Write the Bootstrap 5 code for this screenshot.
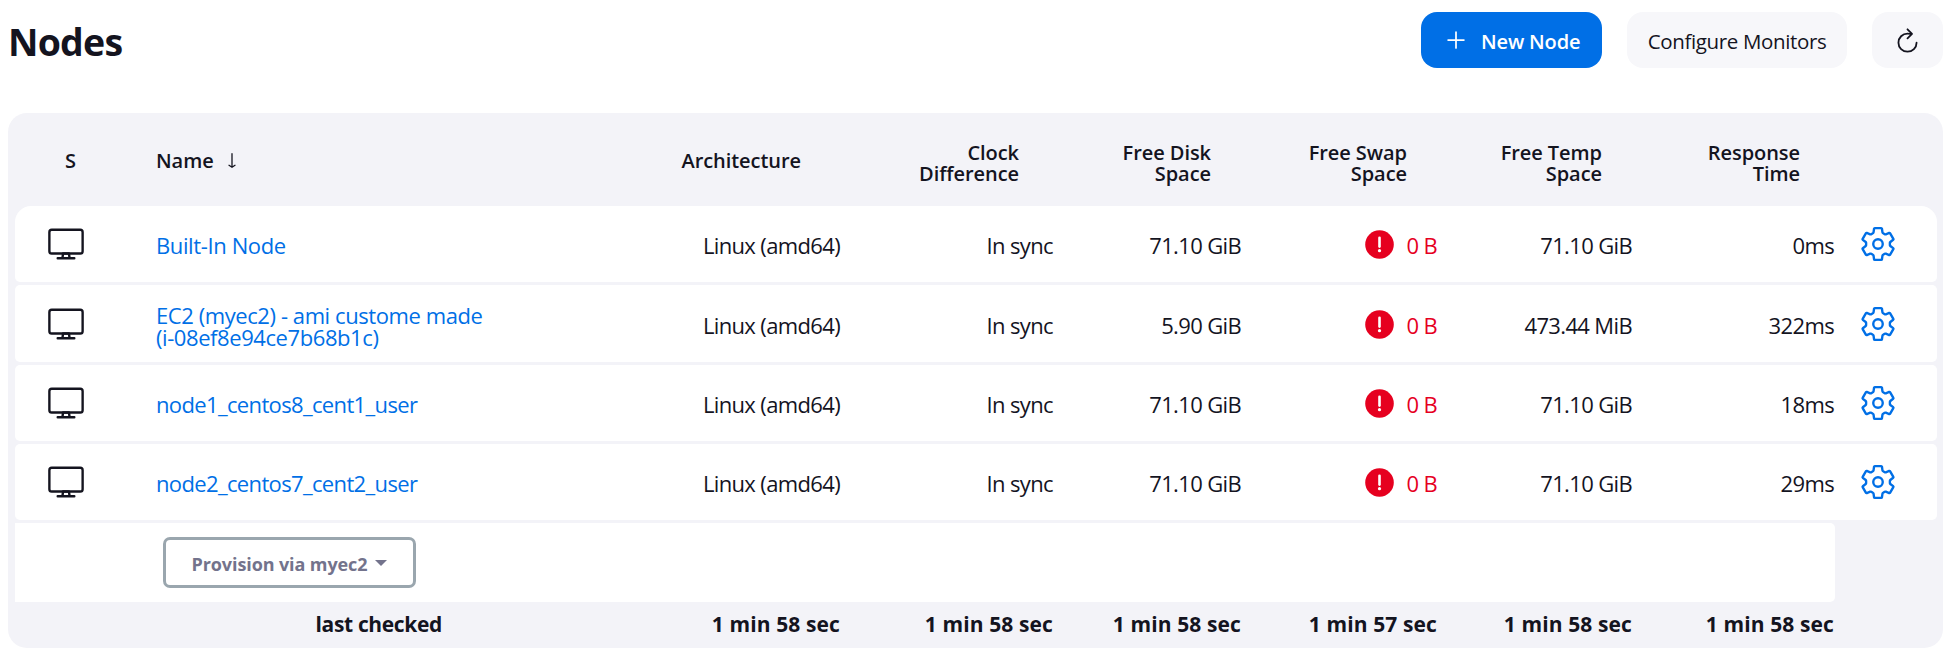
<!DOCTYPE html>
<html lang="en">
<head>
<meta charset="utf-8">
<title>Nodes</title>
<link rel="stylesheet" href="https://cdn.jsdelivr.net/npm/bootstrap@5.3.0/dist/css/bootstrap.min.css">
<style>
:root { --ink: #14141f; --accent: #006fe6; --panel: #f3f3f8; --danger: #e6001f; }
body { font-family: "Open Sans", "Noto Sans", sans-serif; color: var(--ink); background: #fff; overflow: hidden; }
svg { display: block; fill: none; stroke: currentColor; stroke-width: 32; stroke-linecap: round; stroke-linejoin: round; flex: none; }
.page-head { height: 113px; padding: 12px 2px 0 8px; }
.page-title { font-size: 37.5px; font-weight: 700; letter-spacing: -.8px; line-height: 56px; padding-top: 2px; }
.app-btn { height: 56px; border: 0; border-radius: 16px; background: #f7f7fa; color: var(--ink); font-size: 20.5px; letter-spacing: -.36px; line-height: 56px; padding: 1px 0 0; }
.app-btn.app-primary { width: 181px; background: var(--accent); color: #fff; font-weight: 600; font-size: 20px; letter-spacing: -.15px; padding: 3px 0 0 21px; }
.app-primary svg { margin: -4px 11px 0 0; }
.btn-configure { width: 220px; margin: 0 25px; }
.btn-refresh { width: 71px; padding: 0; }
.panel { margin: 0 2px 0 8px; padding: 0 7px; height: 535px; border-radius: 19px; background: var(--panel); }
.nodes { width: 1922px; table-layout: fixed; border-collapse: separate; border-spacing: 0 3px; line-height: 22px; }
.nodes th, .nodes td { padding: 0; text-align: right; vertical-align: middle; }
.nodes thead th { height: 87px; font-size: 20px; font-weight: 600; letter-spacing: -.06px; line-height: 21px; padding: 2px 31px 0 0; }
.nodes thead th.two { padding-top: 7px; }
.nodes tbody td { height: 76px; background: #fff; font-size: 22px; letter-spacing: -.64px; padding: 2px 1px 0 0; }
.nodes tbody td:first-child { border-radius: 5px 0 0 5px; }
.nodes tbody td:last-child { border-radius: 0 5px 5px 0; }
.nodes tbody tr:first-child td:first-child { border-top-left-radius: 16px; }
.nodes tbody tr:first-child td:last-child { border-top-right-radius: 16px; }
.nodes tbody td.tall { height: 77px; }
.nodes tbody .ico { padding: 0; }
.nodes tbody td:nth-child(2) { text-align: left; }
.nodes a { color: var(--accent); text-decoration: none; }
.nodes a.loose { letter-spacing: -.38px; }
.nodes a.long { letter-spacing: -.42px; position: relative; top: 1px; }
.nodes .provision td { height: 79px; padding: 0; }
.nodes tfoot th { height: 40px; font-size: 21px; font-weight: 700; letter-spacing: .12px; padding: 0 1px 2px 0; }
.low { color: var(--danger); }
.btn-provision { width: 253px; height: 51px; margin-left: 148px; border: 3px solid #9aa6ae; border-radius: 7px; background: #fff; color: #73738c; font-size: 18px; font-weight: 700; letter-spacing: -.1px; line-height: 22px; padding: 2px 0 0; }
.btn-provision::after { margin: -5px 0 0 8px !important; border-width: 6px 6px 0 !important; }
</style>
</head>
<body>
<svg width="0" height="0" class="position-absolute">
  <symbol id="desktop" viewBox="0 0 512 512"><rect x="32" y="64" width="448" height="320" rx="32"/><path d="M304 448l-8-64h-80l-8 64zM368 448H144"/></symbol>
  <symbol id="gear" viewBox="0 0 512 512"><circle cx="256" cy="256" r="64"/><path d="M416.400 256c0-4.200-.2-8.300-.6-12.500a16 16 0 016.100-14.100l38.200-30a10.800 10.800 0 002.400-13.700l-42.800-74a10.800 10.800 0 00-13.100-4.600l-44.900 18.100a16 16 0 01-15.100-1.700 155 155 0 00-21.500-12.600 16 16 0 01-9-12.200l-6.700-47.800A11.100 11.100 0 00298.800 42h-85.600a11.100 11.100 0 00-10.700 9.200l-6.700 47.900a16 16 0 01-8.800 12.100 164 164 0 00-21.500 12.500 16 16 0 01-15.200 1.800l-44.900-18.100A10.800 10.800 0 0092.300 112l-42.800 74a10.800 10.800 0 002.400 13.700l38.200 30a16 16 0 016.100 13.900 155 155 0 000 24.900 16 16 0 01-6.100 14l-38.200 30A10.800 10.800 0 0049.500 326l42.800 74a10.800 10.800 0 0013.100 4.600l44.900-18.100a16 16 0 0115.100 1.700 155 155 0 0021.500 12.600 16 16 0 019 12.200l6.700 47.800a11.100 11.100 0 0010.600 9.200h85.600a11.100 11.100 0 0010.700-9.200l6.700-47.900a16 16 0 018.800-12.100 164 164 0 0021.500-12.500 16 16 0 0115.200-1.800l44.900 18.100a10.800 10.800 0 0013.100-4.600l42.800-74a10.800 10.800 0 00-2.400-13.700l-38.200-30a16 16 0 01-6.100-14c.4-4.100.6-8.200.6-12.300z"/></symbol>
  <symbol id="alert" viewBox="0 0 29 29"><circle cx="14.500" cy="14.500" r="14.300" fill="currentColor" stroke="none"/><path d="M14.500 7.800v8.800" stroke="#fff" stroke-width="2.600"/><circle cx="14.500" cy="20.700" r="1.600" fill="#fff" stroke="none"/></symbol>
</svg>

<header class="page-head d-flex align-items-start">
  <h1 class="page-title mb-0 me-auto">Nodes</h1>
  <button class="app-btn app-primary d-flex align-items-center"><svg width="28" height="28" viewBox="0 0 512 512"><path d="M256 112v288M400 256H112"/></svg>New Node</button>
  <button class="app-btn btn-configure">Configure Monitors</button>
  <button class="app-btn btn-refresh d-flex align-items-center justify-content-center" aria-label="Refresh"><svg width="29" height="29" viewBox="0 0 512 512"><path d="M320 146s24.400-12-64-12a160 160 0 10160 160M256 58l80 80-80 80"/></svg></button>
</header>

<main class="panel">
  <table class="nodes">
    <colgroup><col style="width:142px"><col style="width:443px"><col style="width:241px"><col style="width:213px"><col style="width:188px"><col style="width:196px"><col style="width:195px"><col style="width:202px"><col style="width:102px"></colgroup>
    <thead>
      <tr>
        <th style="padding-right:81px">S</th>
        <th class="text-start"><span style="margin-left:-1px">Name</span>&nbsp; <svg class="d-inline-block align-baseline" style="margin:0 0 -1px 3px" width="10" height="16" viewBox="0 0 10 16"><path stroke-width="1.300" d="M5 .7v13M2 12.300l3 2 3-2"/></svg></th>
        <th style="padding-right:40px">Architecture</th>
        <th class="two" style="padding-right:35px">Clock<br>Difference</th>
        <th class="two">Free Disk<br>Space</th>
        <th class="two">Free Swap<br>Space</th>
        <th class="two">Free Temp<br>Space</th>
        <th class="two" style="padding-right:35px">Response<br>Time</th>
        <th></th>
      </tr>
    </thead>
    <tbody id="rows"></tbody>
    <tfoot>
      <tr><th></th><th style="padding-right:158px;letter-spacing:-.35px">last checked</th><th>1 min 58 sec</th><th>1 min 58 sec</th><th>1 min 58 sec</th><th>1 min 57 sec</th><th>1 min 58 sec</th><th>1 min 58 sec</th><th></th></tr>
    </tfoot>
  </table>
</main>

<script>
const nodes = [
  ['Built-In Node', '71.10 GiB', '71.10 GiB', '0ms', 'loose'],
  ['EC2 (myec2) - ami custome made<br>(i-08ef8e94ce7b68b1c)', '5.90 GiB', '473.44 MiB', '322ms', 'long'],
  ['node1_centos8_cent1_user', '71.10 GiB', '71.10 GiB', '18ms', ''],
  ['node2_centos7_cent2_user', '71.10 GiB', '71.10 GiB', '29ms', '']
];
document.getElementById('rows').innerHTML = nodes.map(([name, disk, temp, time, fit], i) => `
  <tr>
    <td class="ico${i === 1 ? ' tall' : ''}"><svg style="margin-left:32px" width="38" height="38"><use href="#desktop"/></svg></td>
    <td><a href="#" class="d-block ${fit}" style="margin-left:-1px">${name}</a></td>
    <td>Linux (amd64)</td>
    <td>In sync</td>
    <td>${disk}</td>
    <td class="low"><div class="d-flex justify-content-end align-items-center"><svg style="margin:-1px 12px 0 0" width="29" height="29"><use href="#alert"/></svg>0 B</div></td>
    <td>${temp}</td>
    <td>${time}</td>
    <td class="ico"><a href="#" aria-label="Configure"><svg style="margin-left:24px" width="38" height="38"><use href="#gear"/></svg></a></td>
  </tr>`).join('') + `
  <tr class="provision"><td colspan="8" class="text-start"><button class="btn-provision dropdown-toggle">Provision via myec2</button></td></tr>`;
</script>
<script src="https://cdn.jsdelivr.net/npm/bootstrap@5.3.0/dist/js/bootstrap.bundle.min.js"></script>
</body>
</html>
